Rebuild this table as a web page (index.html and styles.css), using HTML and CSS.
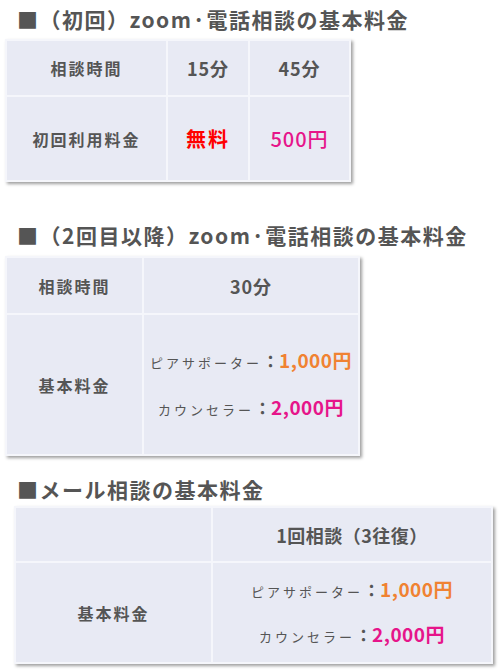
FILE: index.html
```html
<!DOCTYPE html>
<html lang="ja">
<head>
<meta charset="utf-8">
<title>基本料金</title>
<link rel="stylesheet" href="styles.css">
</head>
<body>
<h2 class="ttl ttl-1">■（初回）zoom·電話相談の基本料金</h2>
<div class="tbl tbl-1">
  <div class="cell head">相談時間</div>
  <div class="cell num">15分</div>
  <div class="cell num">45分</div>
  <div class="cell head">初回利用料金</div>
  <div class="cell free">無料</div>
  <div class="cell yen">500円</div>
</div>

<h2 class="ttl ttl-2">■（2回目以降）zoom·電話相談の基本料金</h2>
<div class="tbl tbl-2">
  <div class="cell head">相談時間</div>
  <div class="cell num">30分</div>
  <div class="cell head">基本料金</div>
  <div class="cell prices">
    <div class="line"><span class="who">ピアサポーター</span><span class="colon">：</span><span class="p-orange">1,000円</span></div>
    <div class="line"><span class="who">カウンセラー</span><span class="colon">：</span><span class="p-pink">2,000円</span></div>
  </div>
</div>

<h2 class="ttl ttl-3">■メール相談の基本料金</h2>
<div class="tbl tbl-3">
  <div class="cell head"></div>
  <div class="cell mail">1回相談（3往復）</div>
  <div class="cell head">基本料金</div>
  <div class="cell prices">
    <div class="line"><span class="who">ピアサポーター</span><span class="colon">：</span><span class="p-orange">1,000円</span></div>
    <div class="line"><span class="who">カウンセラー</span><span class="colon">：</span><span class="p-pink">2,000円</span></div>
  </div>
</div>
</body>
</html>
```

FILE: styles.css
```css
html, body {
  margin: 0;
  padding: 0;
  background: #ffffff;
}
body {
  width: 501px;
  height: 670px;
  overflow: hidden;
  font-family: "Noto Sans CJK JP", "Noto Sans", sans-serif;
  color: #555555;
}
.ttl {
  margin: 0 0 0 17px;
  font-size: 21px;
  line-height: 30px;
  font-weight: 700;
  letter-spacing: 1.5px;
  color: #555555;
  white-space: nowrap;
}
.ttl-1 { margin-top: 4px; }
.ttl-2 { margin-top: 38px; }
.ttl-3 { margin-top: 18px; }

.tbl {
  display: grid;
  gap: 2px;
  padding: 2px;
  background: #f5f6fb;
  box-shadow: 2px 2px 3px rgba(0, 0, 0, 0.38);
  width: max-content;
}
.tbl-1 {
  margin: 5px 0 0 5px;
  grid-template-columns: 159px 80px 99px;
  grid-template-rows: 54px 83px;
}
.tbl-2 {
  margin: 6px 0 0 5px;
  grid-template-columns: 135px 214px;
  grid-template-rows: 55px 139px;
}
.tbl-3 {
  margin: 2px 0 0 14px;
  grid-template-columns: 195px 278px;
  grid-template-rows: 53px 99px;
}
.cell {
  background: #e8eaf4;
  display: flex;
  align-items: center;
  justify-content: center;
  text-align: center;
}
.head {
  font-size: 16px;
  font-weight: 700;
  letter-spacing: 2px;
}
.num {
  font-size: 18px;
  font-weight: 700;
  letter-spacing: 1px;
}
.free {
  font-size: 20px;
  font-weight: 700;
  letter-spacing: 2px;
  color: #ff0000;
}
.yen {
  font-size: 20px;
  font-weight: 500;
  letter-spacing: 1px;
  color: #e6158a;
}
.mail {
  font-size: 18px;
  font-weight: 700;
  letter-spacing: 0.5px;
}
.prices {
  flex-direction: column;
  gap: 14px;
}
.tbl-3 .prices { gap: 12px; }
.line {
  display: flex;
  align-items: baseline;
  justify-content: center;
  line-height: 30px;
  white-space: nowrap;
}
.who {
  font-size: 13px;
  letter-spacing: 3px;
  color: #555555;
}
.colon {
  font-size: 17px;
  font-weight: 700;
  color: #555555;
}
.p-orange, .p-pink {
  font-size: 19px;
  font-weight: 700;
  letter-spacing: 0.5px;
}
.p-orange { color: #f08232; }
.p-pink { color: #e6158a; }
```
